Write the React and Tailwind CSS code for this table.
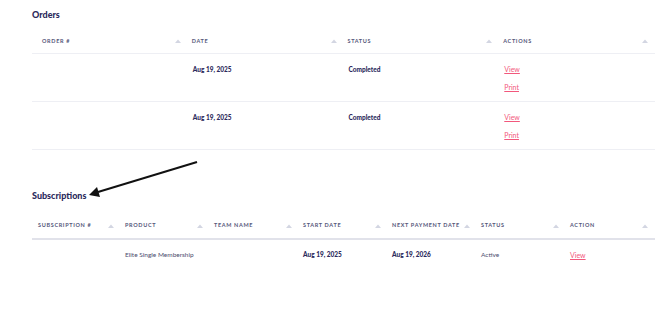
import React from "react";

const orderCols = ["Order #", "Date", "Status", "Actions"];
const orders = [
  { date: "Aug 19, 2025", status: "Completed" },
  { date: "Aug 19, 2025", status: "Completed" },
];

const subCols = [
  "Subscription #",
  "Product",
  "Team Name",
  "Start Date",
  "Next Payment Date",
  "Status",
  "Action",
];

function SortArrow() {
  return (
    <svg width="6" height="4" viewBox="0 0 6 4" className="shrink-0">
      <path d="M0 4 L3 0.5 L6 4 Z" fill="#d3d6e2" />
    </svg>
  );
}

function HeadCell({ label, first, wide }) {
  return (
    <div
      className={`flex items-center justify-between pr-[7px] ${
        first ? (wide ? "pl-[10px]" : "pl-[6px]") : "pl-[4px]"
      }`}
    >
      <span className="whitespace-nowrap text-[5.5px] font-bold uppercase tracking-[0.12em] text-[#55577a]">
        {label}
      </span>
      <SortArrow />
    </div>
  );
}

export default function App() {
  return (
    <div
      className="relative w-[670px] h-[316px] bg-white overflow-hidden"
      style={{ fontFamily: "Lato, 'Liberation Sans', sans-serif" }}
    >
      <div className="ml-[32px] w-[623px]">
        <h2 className="pt-[10px] h-[20px] text-[9px] leading-[10px] font-black text-[#2b2a5c]">
          Orders
        </h2>

        <div className="mt-[8px] grid grid-cols-4 h-[26px] pt-[1px] border-b border-[#eeeff4]">
          {orderCols.map((c, i) => (
            <HeadCell key={c} label={c} first={i === 0} wide />
          ))}
        </div>

        {orders.map((o, i) => (
          <div
            key={i}
            className="grid grid-cols-4 h-[48px] border-b border-[#eeeff4] text-[6.5px]"
          >
            <div />
            <div className="pl-[5px] pt-[11px] font-black text-[#2b2a5c]">{o.date}</div>
            <div className="pl-[5px] pt-[11px] font-black text-[#2b2a5c]">{o.status}</div>
            <div className="pl-[5px] pt-[10px] flex flex-col gap-[8px] text-[7px] text-[#f2587c]">
              <a className="underline leading-[10px]">View</a>
              <a className="underline leading-[10px]">Print</a>
            </div>
          </div>
        ))}

        <h2 className="mt-[40px] h-[12px] text-[9px] leading-[12px] font-black text-[#2b2a5c]">
          Subscriptions
        </h2>

        <div className="mt-[11px] grid grid-cols-7 h-[27px] border-b-2 border-[#e1e2ea]">
          {subCols.map((c, i) => (
            <HeadCell key={c} label={c} first={i === 0} />
          ))}
        </div>

        <div className="grid grid-cols-7 h-[30px] items-center text-[6.5px]">
          <div />
          <div className="pl-[4px] text-[#4b4d6e]">Elite Single Membership</div>
          <div />
          <div className="pl-[4px] font-black text-[#2b2a5c]">Aug 19, 2025</div>
          <div className="pl-[4px] font-black text-[#2b2a5c]">Aug 19, 2026</div>
          <div className="pl-[4px] text-[#4b4d6e]">Active</div>
          <div className="pl-[4px]">
            <a className="underline text-[7px] text-[#f2587c]">View</a>
          </div>
        </div>
      </div>

      <svg
        className="absolute left-0 top-0 pointer-events-none"
        width="670"
        height="316"
      >
        <line x1="197" y1="162" x2="98" y2="192" stroke="#111" strokeWidth="2" />
        <path d="M89 195 L97 187 L100 197 Z" fill="#111" />
      </svg>
    </div>
  );
}
